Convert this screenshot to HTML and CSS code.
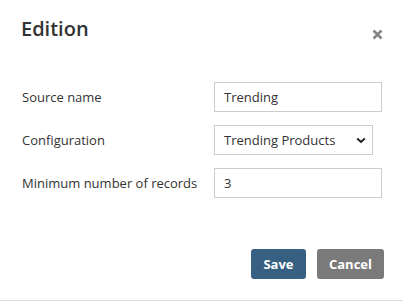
FILE: index.html
```html
<!DOCTYPE html>
<html lang="en">
<head>
    <meta charset="UTF-8">
    <title>Edition</title>
    <link rel="stylesheet" href="styles.css">
</head>
<body>
    <div class="modal">
        <header class="modal-header">
            <h1>Edition</h1>
            <button class="close" type="button" aria-label="Close">
                <svg width="11" height="11" viewBox="0 0 11 11">
                    <path d="M1.5 1.5 L9.5 9.5 M9.5 1.5 L1.5 9.5" stroke="#858585" stroke-width="2.6" stroke-linecap="butt"/>
                </svg>
            </button>
        </header>

        <form class="modal-body">
            <div class="row">
                <label for="source">Source name</label>
                <input type="text" id="source" class="field" value="Trending">
            </div>
            <div class="row">
                <label for="config">Configuration</label>
                <div class="select-wrap">
                    <select id="config" class="field select">
                        <option>Trending Products</option>
                    </select>
                    <svg class="chevron" width="10" height="7" viewBox="0 0 10 7">
                        <path d="M1.2 1.5 L5 5 L8.8 1.5" fill="none" stroke="#222" stroke-width="2"/>
                    </svg>
                </div>
            </div>
            <div class="row">
                <label for="records">Minimum number of records</label>
                <input type="text" id="records" class="field" value="3">
            </div>
        </form>

        <footer class="modal-footer">
            <button type="button" class="btn btn-save">Save</button>
            <button type="button" class="btn btn-cancel">Cancel</button>
        </footer>
    </div>
</body>
</html>
```

FILE: styles.css
```css
* {
    margin: 0;
    padding: 0;
    box-sizing: border-box;
}

body {
    font-family: 'Open Sans', sans-serif;
    font-size: 13px;
    color: #333;
    background: #fff;
}

.modal {
    width: 403px;
    height: 301px;
    border-bottom: 1px solid #ddd;
    display: flex;
    flex-direction: column;
}

.modal-header {
    display: flex;
    justify-content: space-between;
    align-items: flex-start;
    padding: 17px 20px 0 21px;
    height: 82px;
}

.modal-header h1 {
    font-size: 20px;
    font-weight: 600;
    line-height: 24px;
    color: #333;
}

.close {
    background: none;
    border: none;
    margin-top: 12px;
    cursor: pointer;
    line-height: 0;
}

.modal-body {
    padding: 0 0 0 22px;
    display: flex;
    flex-direction: column;
    gap: 13px;
}

.row {
    display: grid;
    grid-template-columns: 192px auto;
    align-items: center;
}

.row label {
    color: #333;
}

.field {
    font-family: 'Open Sans', sans-serif;
    font-size: 13px;
    color: #333;
    height: 30px;
    width: 168px;
    border: 1px solid #ccc;
    padding: 0 9px;
    background: #fff;
    outline: none;
}

.select-wrap {
    position: relative;
    width: 159px;
}

.select {
    width: 159px;
    appearance: none;
    -webkit-appearance: none;
    border-radius: 0;
}

.chevron {
    position: absolute;
    right: 7px;
    top: 12px;
    pointer-events: none;
}

.modal-footer {
    margin-top: auto;
    display: flex;
    justify-content: flex-end;
    gap: 11px;
    padding: 0 19px 21px 0;
}

.btn {
    font-family: 'Open Sans', sans-serif;
    font-size: 13px;
    font-weight: 700;
    color: #fff;
    border: none;
    border-radius: 3px;
    height: 30px;
    cursor: pointer;
}

.btn-save {
    background: #365f82;
    width: 55px;
}

.btn-cancel {
    background: #7a7a7a;
    width: 67px;
}
```
